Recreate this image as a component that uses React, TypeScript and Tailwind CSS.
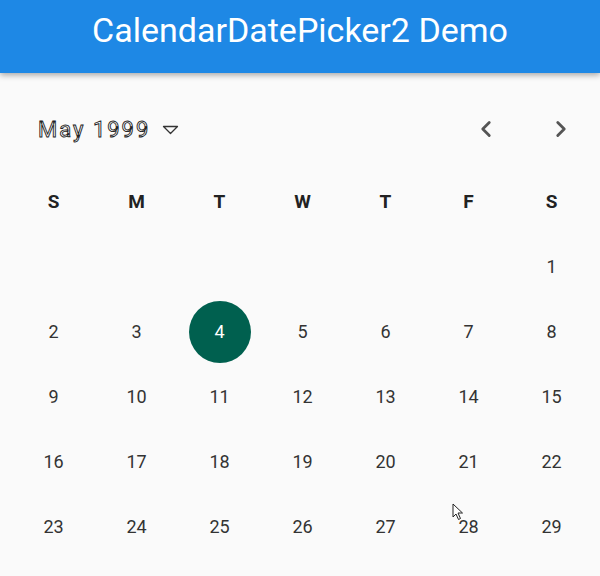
import { ChevronLeft, ChevronRight } from 'lucide-react';

const WEEKDAYS = ['S', 'M', 'T', 'W', 'T', 'F', 'S'];

// May 1999 starts on a Saturday
const cells: (number | null)[] = [
  null, null, null, null, null, null,
  ...Array.from({ length: 29 }, (_, i) => i + 1),
];

export default function App() {
  return (
    <div className="relative w-[600px] h-[576px] overflow-hidden bg-[#fafafa] font-['Roboto',sans-serif]">
      {/* app bar */}
      <div className="relative z-10 h-[73px] bg-[#1e88e5] flex justify-center pt-[13px] shadow-[0_2px_6px_rgba(0,0,0,0.35)]">
        <h1 className="text-white text-[34px] leading-[35px]">
          CalendarDatePicker2 Demo
        </h1>
      </div>

      {/* month header */}
      <div className="flex items-center h-[56px] mt-[28px] pl-[38px] pr-[26px]">
        <span className="text-[22px] tracking-[2px] text-white [-webkit-text-stroke:0.9px_#222]">
          May 1999
        </span>
        <svg width="17" height="10" viewBox="0 0 17 10" className="ml-[12px] mt-[1px]">
          <path d="M1.5 1.5 L15.5 1.5 L8.5 8.5 Z" fill="none" stroke="#333" strokeWidth="1.3" strokeLinejoin="round" />
        </svg>
        <div className="flex-1" />
        <ChevronLeft className="w-[26px] h-[26px] text-[#555]" strokeWidth={2.6} />
        <ChevronRight className="w-[26px] h-[26px] text-[#555] ml-[49px]" strokeWidth={2.6} />
      </div>

      {/* weekday labels */}
      <div className="grid grid-cols-7 w-[581px] pl-[12px] box-content mt-[14px]">
        {WEEKDAYS.map((d, i) => (
          <div key={i} className="h-[63px] flex items-center justify-center text-[19px] font-bold text-[#222]">
            {d}
          </div>
        ))}
      </div>

      {/* days */}
      <div className="grid grid-cols-7 w-[581px] pl-[12px] box-content">
        {cells.map((n, i) => (
          <div key={i} className="h-[65px] flex items-center justify-center">
            {n === 4 ? (
              <div className="w-[62px] h-[62px] rounded-full bg-[#00604f] flex items-center justify-center text-white text-[18px]">
                {n}
              </div>
            ) : (
              <span className="text-[18px] text-[#333]">{n ?? ''}</span>
            )}
          </div>
        ))}
      </div>

      {/* mouse pointer */}
      <svg width="12" height="18" viewBox="0 0 12 18" className="absolute left-[452px] top-[503px]">
        <path d="M1 1 L1 14 L4 11 L6.5 16.5 L8.5 15.5 L6 10 L10.5 10 Z" fill="#fff" stroke="#222" strokeWidth="1" strokeLinejoin="round" />
      </svg>
    </div>
  );
}
